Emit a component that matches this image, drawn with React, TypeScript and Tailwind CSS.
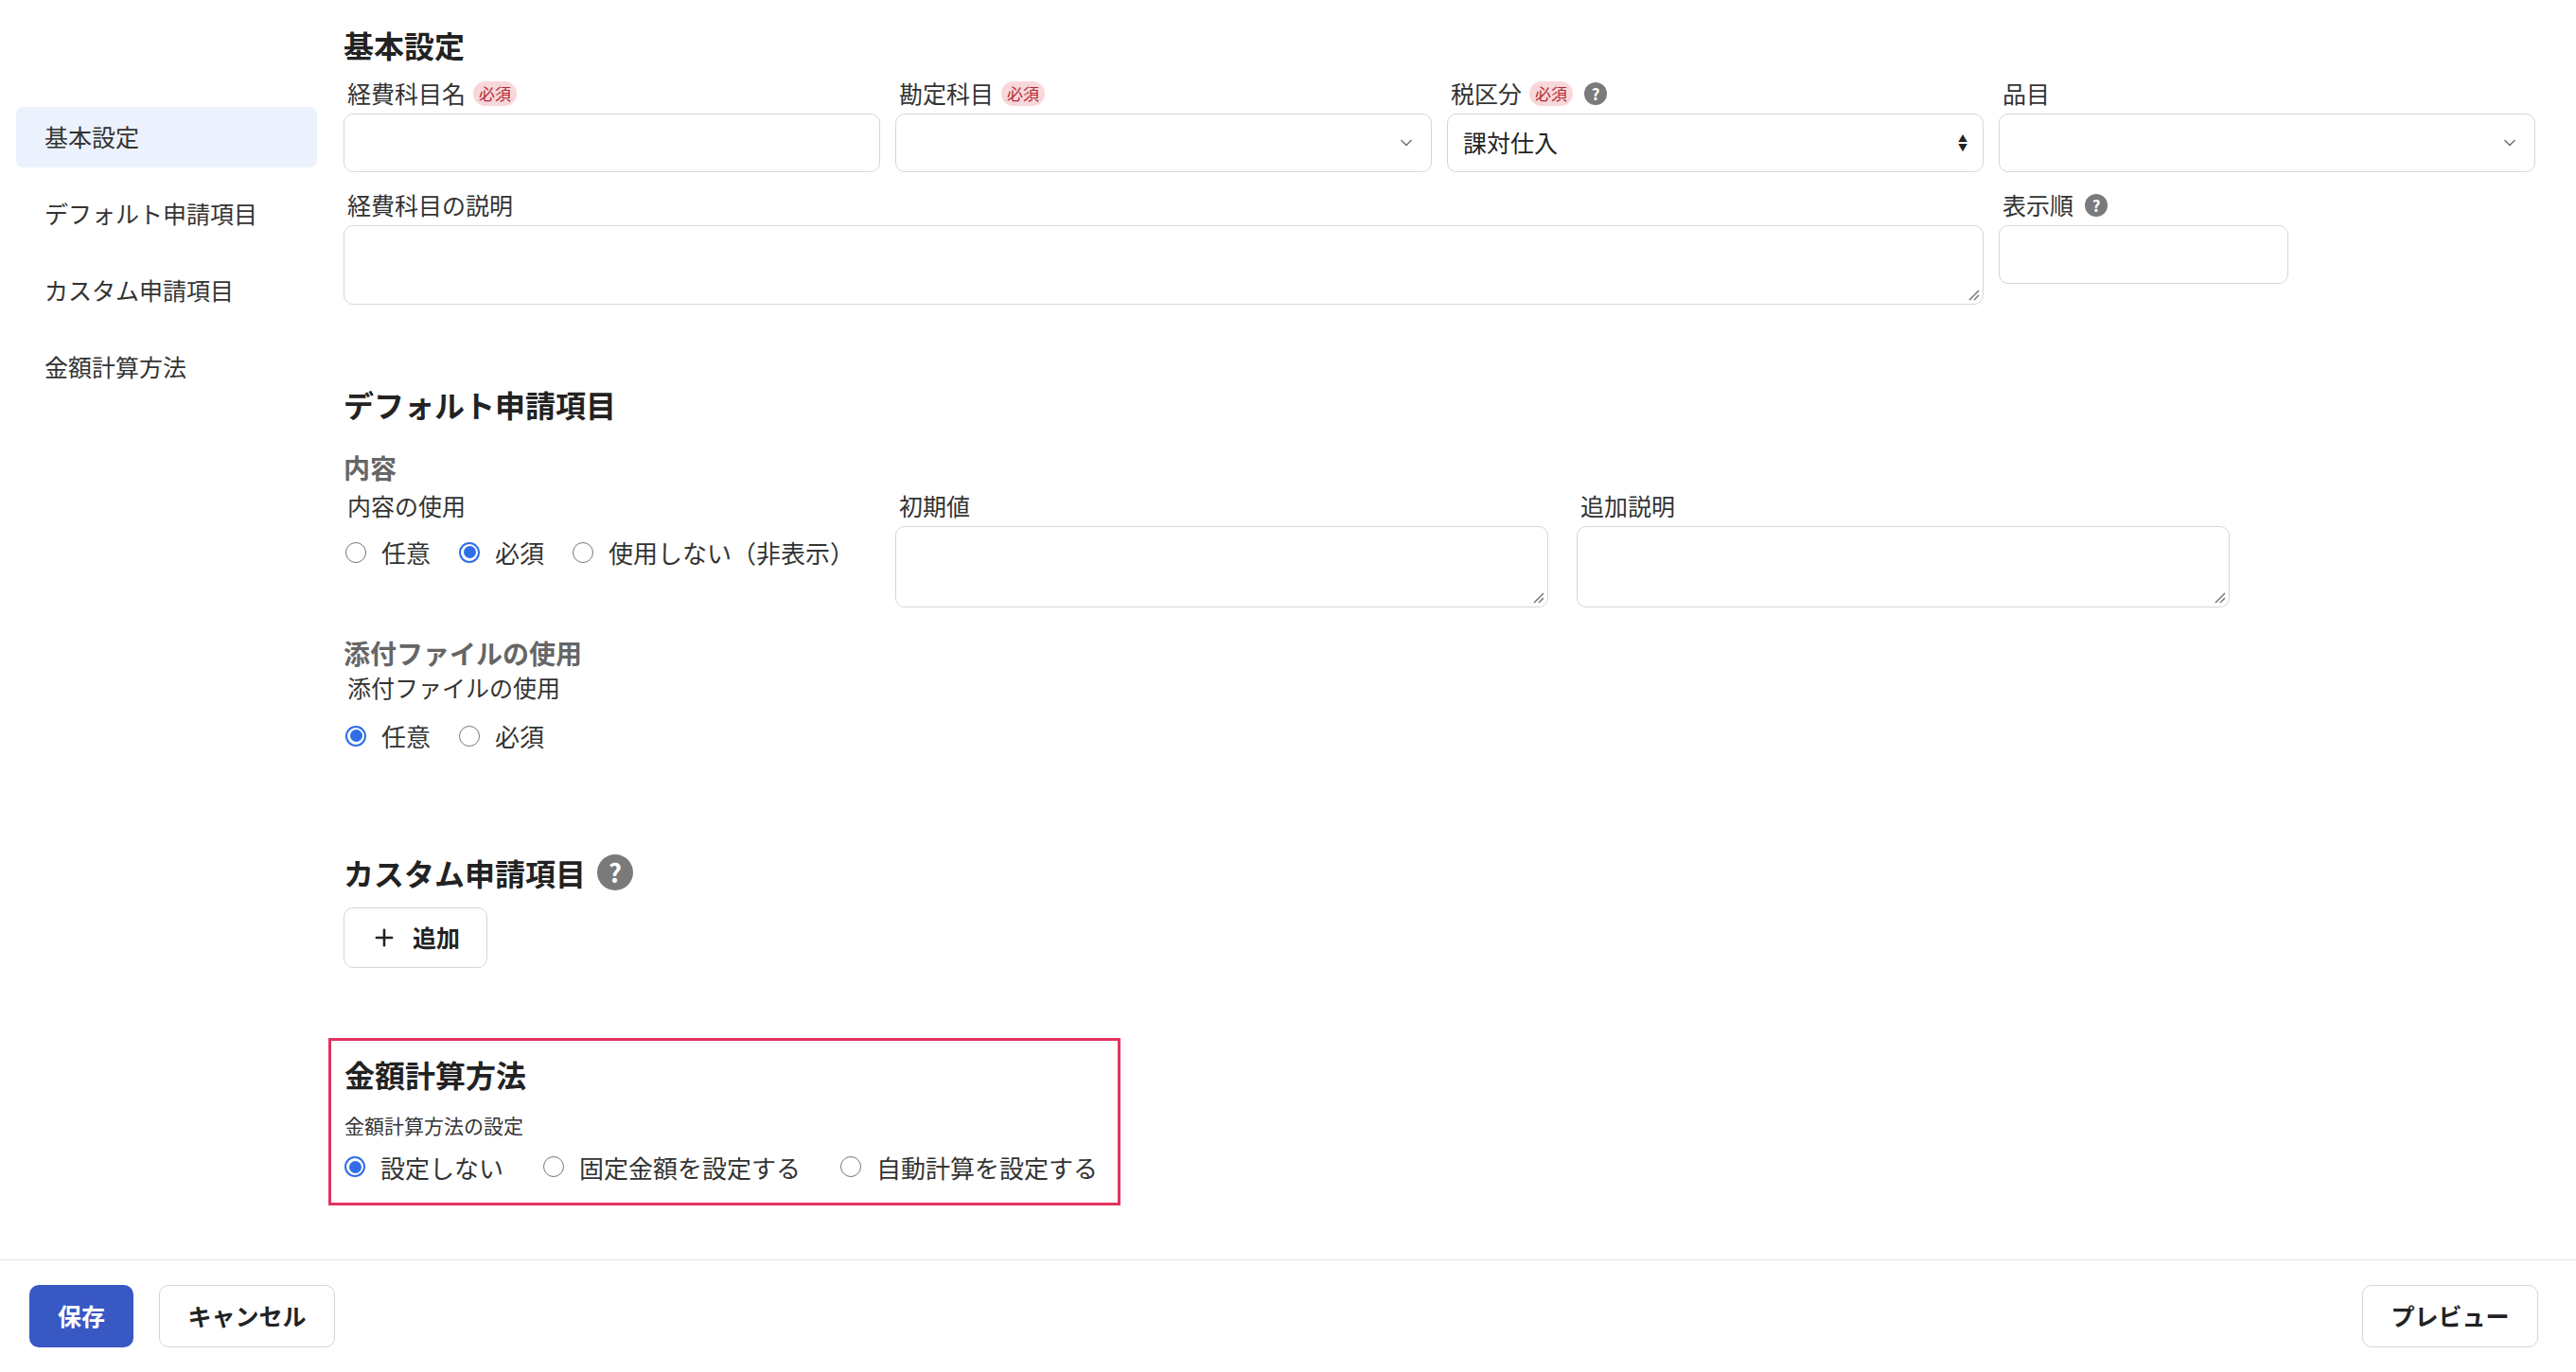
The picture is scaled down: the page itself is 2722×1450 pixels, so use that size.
import { ChevronDown, Plus } from "lucide-react";

const font = { fontFamily: '"Noto Sans CJK JP", "Noto Sans", sans-serif' };

const Req = () => (
  <span className="ml-2 rounded-full bg-[#f8d7da] px-[6px] py-[1px] text-[17px] leading-[24px] text-[#b02a37]">必須</span>
);

const Help = ({ big }: { big?: boolean }) => (
  <span
    className={`ml-3 inline-flex items-center justify-center rounded-full bg-[#7a7a7a] font-bold text-white ${
      big ? "h-[38px] w-[38px] text-[27px]" : "h-[24px] w-[24px] text-[17px]"
    }`}
  >
    ?
  </span>
);

const Label = ({ children }: { children: React.ReactNode }) => (
  <div className="flex h-[38px] items-center pl-1 text-[25px] text-[#333]">{children}</div>
);

const Box = ({ className = "", children }: { className?: string; children?: React.ReactNode }) => (
  <div className={`relative rounded-[10px] border border-[#d6d6d6] bg-white ${className}`}>{children}</div>
);

const Grip = () => (
  <svg className="absolute bottom-[3px] right-[3px]" width="16" height="16" viewBox="0 0 16 16">
    <path d="M15 5 L5 15 M15 10 L10 15" stroke="#777" strokeWidth="1.5" />
  </svg>
);

const Radio = ({ checked, label }: { checked?: boolean; label: string }) => (
  <label className="flex items-center gap-[16px] text-[26px] text-[#333]">
    {checked ? (
      <span className="flex h-[22px] w-[22px] items-center justify-center rounded-full border-[2px] border-[#2f6ee8]">
        <span className="h-[13px] w-[13px] rounded-full bg-[#2f6ee8]" />
      </span>
    ) : (
      <span className="h-[22px] w-[22px] rounded-full border-[1.5px] border-[#777]" />
    )}
    <span>{label}</span>
  </label>
);

export default function App() {
  return (
    <div style={font} className="flex h-[1450px] w-[2722px] flex-col bg-white text-[#222]">
      <div className="flex flex-1">
        <aside className="w-[363px] shrink-0 pt-[113px] pl-[17px] pr-[28px]">
          {["基本設定", "デフォルト申請項目", "カスタム申請項目", "金額計算方法"].map((t, i) => (
            <div
              key={t}
              className={`mb-[17px] flex h-[64px] items-center rounded-[8px] px-[30px] text-[25px] text-[#333] ${
                i === 0 ? "bg-[#ebf1fd]" : ""
              }`}
            >
              {t}
            </div>
          ))}
        </aside>
        <main className="flex-1 pt-[26px] pr-[43px]">
          <h2 className="text-[32px] font-bold leading-[42px]">基本設定</h2>
          <div className="mt-[12px] grid grid-cols-4 gap-x-[16px]">
            <div>
              <Label>経費科目名<Req /></Label>
              <Box className="mt-[2px] h-[62px]" />
            </div>
            <div>
              <Label>勘定科目<Req /></Label>
              <Box className="mt-[2px] flex h-[62px] items-center justify-end pr-4">
                <ChevronDown size={20} color="#777" />
              </Box>
            </div>
            <div>
              <Label>税区分<Req /><Help /></Label>
              <Box className="mt-[2px] flex h-[62px] items-center justify-between px-4 text-[25px]">
                <span>課対仕入</span>
                <span className="flex flex-col text-[10px] leading-[10px]">
                  <span>▲</span>
                  <span>▼</span>
                </span>
              </Box>
            </div>
            <div>
              <Label>品目</Label>
              <Box className="mt-[2px] flex h-[62px] items-center justify-end pr-4">
                <ChevronDown size={20} color="#777" />
              </Box>
            </div>
            <div className="col-span-3 mt-[16px]">
              <Label>経費科目の説明</Label>
              <Box className="mt-[2px] h-[84px]">
                <Grip />
              </Box>
            </div>
            <div className="mt-[16px]">
              <Label>表示順<Help /></Label>
              <Box className="mt-[2px] h-[62px] w-[306px]" />
            </div>
          </div>

          <h2 className="mt-[84px] text-[32px] font-bold leading-[42px]">デフォルト申請項目</h2>
          <h3 className="mt-[28px] text-[28px] font-bold leading-[36px] text-[#666]">内容</h3>
          <div className="mt-[4px] flex">
            <div className="w-[583px]">
              <Label>内容の使用</Label>
              <div className="mt-[10px] flex gap-[30px] pl-[2px]">
                <Radio label="任意" />
                <Radio checked label="必須" />
                <Radio label="使用しない（非表示）" />
              </div>
            </div>
            <div className="w-[720px]">
              <Label>初期値</Label>
              <Box className="mt-[2px] h-[86px] w-[690px]">
                <Grip />
              </Box>
            </div>
            <div>
              <Label>追加説明</Label>
              <Box className="mt-[2px] h-[86px] w-[690px]">
                <Grip />
              </Box>
            </div>
          </div>

          <h3 className="mt-[30px] text-[28px] font-bold leading-[36px] text-[#666]">添付ファイルの使用</h3>
          <Label>添付ファイルの使用</Label>
          <div className="mt-[12px] flex gap-[30px] pl-[2px]">
            <Radio checked label="任意" />
            <Radio label="必須" />
          </div>

          <h2 className="mt-[104px] flex items-center text-[32px] font-bold leading-[42px]">
            カスタム申請項目<Help big />
          </h2>
          <button className="mt-[16px] flex h-[64px] w-[152px] items-center justify-center gap-4 rounded-[10px] border border-[#d6d6d6] text-[25px] font-bold">
            <Plus size={28} strokeWidth={2.2} />
            追加
          </button>

          <div className="-ml-[16px] mt-[74px] w-[837px] border-[3px] border-[#e3325f] px-[14px] pt-[14px] pb-[18px]">
            <h2 className="text-[32px] font-bold leading-[42px]">金額計算方法</h2>
            <div className="mt-[18px] text-[21px] text-[#333]">金額計算方法の設定</div>
            <div className="mt-[8px] flex gap-[42px]">
              <Radio checked label="設定しない" />
              <Radio label="固定金額を設定する" />
              <Radio label="自動計算を設定する" />
            </div>
          </div>
        </main>
      </div>
      <footer className="flex h-[119px] items-center justify-between border-t border-[#e2e2e2] px-[31px] pr-[40px]">
        <div className="flex gap-[27px]">
          <button className="h-[66px] w-[110px] rounded-[10px] bg-[#3858c4] text-[25px] font-bold text-white">保存</button>
          <button className="h-[66px] w-[186px] rounded-[10px] border border-[#d6d6d6] text-[25px] font-bold">キャンセル</button>
        </div>
        <button className="h-[66px] w-[186px] rounded-[10px] border border-[#d6d6d6] text-[25px] font-bold">プレビュー</button>
      </footer>
    </div>
  );
}
